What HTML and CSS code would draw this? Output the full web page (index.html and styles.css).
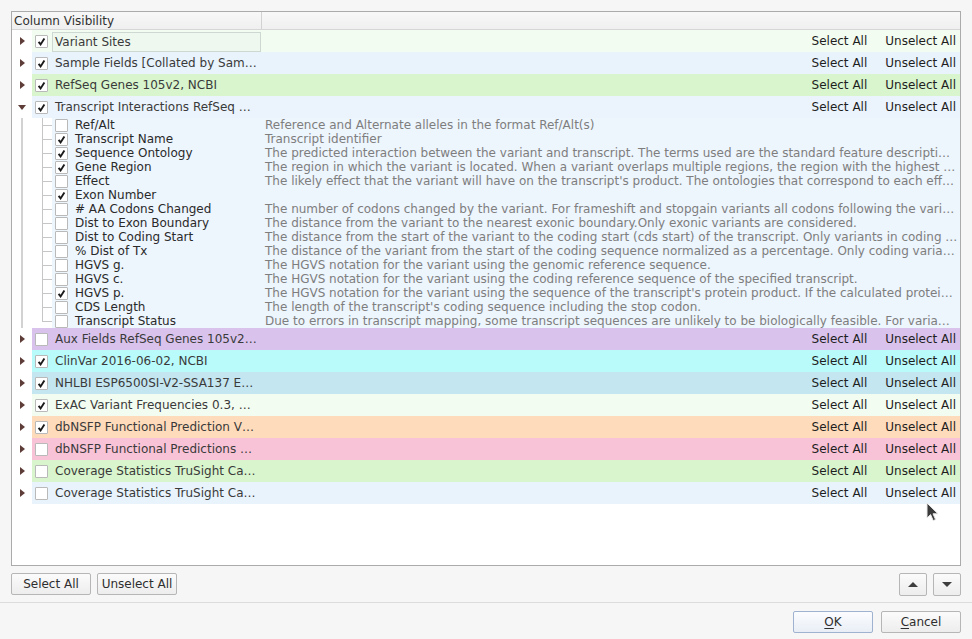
FILE: index.html
```html
<!DOCTYPE html>
<html>
<head>
<meta charset="utf-8">
<link rel="stylesheet" href="styles.css">
</head>
<body>
<div class="main">
  <div class="tree">
    <div class="header"><div class="hcol0">Column Visibility</div><div class="hcol1"></div></div>

    <div class="row">
      <div class="branch"><span class="arrow-r"></span></div>
      <div class="cell bg-vs">
        <div class="name"><span class="cb on"><svg viewBox="0 0 9 9"><path d="M1.6 4.8 L3.6 7.4 L7.4 1.4"/></svg></span><span class="label focus">Variant Sites</span></div>
        <div class="actions"><span>Select All</span><span>Unselect All</span></div>
      </div>
    </div>
    <div class="row">
      <div class="branch"><span class="arrow-r"></span></div>
      <div class="cell bg-sf">
        <div class="name"><span class="cb on"><svg viewBox="0 0 9 9"><path d="M1.6 4.8 L3.6 7.4 L7.4 1.4"/></svg></span><span class="label">Sample Fields [Collated by Sam…</span></div>
        <div class="actions"><span>Select All</span><span>Unselect All</span></div>
      </div>
    </div>
    <div class="row">
      <div class="branch"><span class="arrow-r"></span></div>
      <div class="cell bg-rg">
        <div class="name"><span class="cb on"><svg viewBox="0 0 9 9"><path d="M1.6 4.8 L3.6 7.4 L7.4 1.4"/></svg></span><span class="label">RefSeq Genes 105v2, NCBI</span></div>
        <div class="actions"><span>Select All</span><span>Unselect All</span></div>
      </div>
    </div>
    <div class="row">
      <div class="branch"><span class="arrow-d"></span></div>
      <div class="cell bg-ti">
        <div class="name"><span class="cb on"><svg viewBox="0 0 9 9"><path d="M1.6 4.8 L3.6 7.4 L7.4 1.4"/></svg></span><span class="label">Transcript Interactions RefSeq …</span></div>
        <div class="actions"><span>Select All</span><span>Unselect All</span></div>
      </div>
    </div>

    <div class="crow"><div class="cbranch"></div><div class="ccell"><div class="cname"><span class="cb"></span><span>Ref/Alt</span></div><div class="desc">Reference and Alternate alleles in the format Ref/Alt(s)</div></div></div>
    <div class="crow"><div class="cbranch"></div><div class="ccell"><div class="cname"><span class="cb on"><svg viewBox="0 0 9 9"><path d="M1.6 4.8 L3.6 7.4 L7.4 1.4"/></svg></span><span>Transcript Name</span></div><div class="desc">Transcript identifier</div></div></div>
    <div class="crow"><div class="cbranch"></div><div class="ccell"><div class="cname"><span class="cb on"><svg viewBox="0 0 9 9"><path d="M1.6 4.8 L3.6 7.4 L7.4 1.4"/></svg></span><span>Sequence Ontology</span></div><div class="desc">The predicted interaction between the variant and transcript. The terms used are the standard feature descripti…</div></div></div>
    <div class="crow"><div class="cbranch"></div><div class="ccell"><div class="cname"><span class="cb on"><svg viewBox="0 0 9 9"><path d="M1.6 4.8 L3.6 7.4 L7.4 1.4"/></svg></span><span>Gene Region</span></div><div class="desc">The region in which the variant is located. When a variant overlaps multiple regions, the region with the highest …</div></div></div>
    <div class="crow"><div class="cbranch"></div><div class="ccell"><div class="cname"><span class="cb"></span><span>Effect</span></div><div class="desc">The likely effect that the variant will have on the transcript's product. The ontologies that correspond to each eff…</div></div></div>
    <div class="crow"><div class="cbranch"></div><div class="ccell"><div class="cname"><span class="cb on"><svg viewBox="0 0 9 9"><path d="M1.6 4.8 L3.6 7.4 L7.4 1.4"/></svg></span><span>Exon Number</span></div><div class="desc"></div></div></div>
    <div class="crow"><div class="cbranch"></div><div class="ccell"><div class="cname"><span class="cb"></span><span># AA Codons Changed</span></div><div class="desc">The number of codons changed by the variant. For frameshift and stopgain variants all codons following the vari…</div></div></div>
    <div class="crow"><div class="cbranch"></div><div class="ccell"><div class="cname"><span class="cb"></span><span>Dist to Exon Boundary</span></div><div class="desc">The distance from the variant to the nearest exonic boundary.Only exonic variants are considered.</div></div></div>
    <div class="crow"><div class="cbranch"></div><div class="ccell"><div class="cname"><span class="cb"></span><span>Dist to Coding Start</span></div><div class="desc">The distance from the start of the variant to the coding start (cds start) of the transcript. Only variants in coding …</div></div></div>
    <div class="crow"><div class="cbranch"></div><div class="ccell"><div class="cname"><span class="cb"></span><span>% Dist of Tx</span></div><div class="desc">The distance of the variant from the start of the coding sequence normalized as a percentage. Only coding varia…</div></div></div>
    <div class="crow"><div class="cbranch"></div><div class="ccell"><div class="cname"><span class="cb"></span><span>HGVS g.</span></div><div class="desc">The HGVS notation for the variant using the genomic reference sequence.</div></div></div>
    <div class="crow"><div class="cbranch"></div><div class="ccell"><div class="cname"><span class="cb"></span><span>HGVS c.</span></div><div class="desc">The HGVS notation for the variant using the coding reference sequence of the specified transcript.</div></div></div>
    <div class="crow"><div class="cbranch"></div><div class="ccell"><div class="cname"><span class="cb on"><svg viewBox="0 0 9 9"><path d="M1.6 4.8 L3.6 7.4 L7.4 1.4"/></svg></span><span>HGVS p.</span></div><div class="desc">The HGVS notation for the variant using the sequence of the transcript's protein product. If the calculated protei…</div></div></div>
    <div class="crow"><div class="cbranch"></div><div class="ccell"><div class="cname"><span class="cb"></span><span>CDS Length</span></div><div class="desc">The length of the transcript's coding sequence including the stop codon.</div></div></div>
    <div class="crow"><div class="cbranch last"></div><div class="ccell"><div class="cname"><span class="cb"></span><span>Transcript Status</span></div><div class="desc">Due to errors in transcript mapping, some transcript sequences are unlikely to be biologically feasible. For varia…</div></div></div>

    <div class="row">
      <div class="branch"><span class="arrow-r"></span></div>
      <div class="cell bg-aux">
        <div class="name"><span class="cb"></span><span class="label">Aux Fields RefSeq Genes 105v2…</span></div>
        <div class="actions"><span>Select All</span><span>Unselect All</span></div>
      </div>
    </div>
    <div class="row">
      <div class="branch"><span class="arrow-r"></span></div>
      <div class="cell bg-cv">
        <div class="name"><span class="cb on"><svg viewBox="0 0 9 9"><path d="M1.6 4.8 L3.6 7.4 L7.4 1.4"/></svg></span><span class="label">ClinVar 2016-06-02, NCBI</span></div>
        <div class="actions"><span>Select All</span><span>Unselect All</span></div>
      </div>
    </div>
    <div class="row">
      <div class="branch"><span class="arrow-r"></span></div>
      <div class="cell bg-nh">
        <div class="name"><span class="cb on"><svg viewBox="0 0 9 9"><path d="M1.6 4.8 L3.6 7.4 L7.4 1.4"/></svg></span><span class="label">NHLBI ESP6500SI-V2-SSA137 E…</span></div>
        <div class="actions"><span>Select All</span><span>Unselect All</span></div>
      </div>
    </div>
    <div class="row">
      <div class="branch"><span class="arrow-r"></span></div>
      <div class="cell bg-ex">
        <div class="name"><span class="cb on"><svg viewBox="0 0 9 9"><path d="M1.6 4.8 L3.6 7.4 L7.4 1.4"/></svg></span><span class="label">ExAC Variant Frequencies 0.3, …</span></div>
        <div class="actions"><span>Select All</span><span>Unselect All</span></div>
      </div>
    </div>
    <div class="row">
      <div class="branch"><span class="arrow-r"></span></div>
      <div class="cell bg-db1">
        <div class="name"><span class="cb on"><svg viewBox="0 0 9 9"><path d="M1.6 4.8 L3.6 7.4 L7.4 1.4"/></svg></span><span class="label">dbNSFP Functional Prediction V…</span></div>
        <div class="actions"><span>Select All</span><span>Unselect All</span></div>
      </div>
    </div>
    <div class="row">
      <div class="branch"><span class="arrow-r"></span></div>
      <div class="cell bg-db2">
        <div class="name"><span class="cb"></span><span class="label">dbNSFP Functional Predictions …</span></div>
        <div class="actions"><span>Select All</span><span>Unselect All</span></div>
      </div>
    </div>
    <div class="row">
      <div class="branch"><span class="arrow-r"></span></div>
      <div class="cell bg-cs1">
        <div class="name"><span class="cb"></span><span class="label">Coverage Statistics TruSight Ca…</span></div>
        <div class="actions"><span>Select All</span><span>Unselect All</span></div>
      </div>
    </div>
    <div class="row">
      <div class="branch"><span class="arrow-r"></span></div>
      <div class="cell bg-cs2">
        <div class="name"><span class="cb"></span><span class="label">Coverage Statistics TruSight Ca…</span></div>
        <div class="actions"><span>Select All</span><span>Unselect All</span></div>
      </div>
    </div>
  </div>

  <div class="btnrow">
    <button class="btn">Select All</button>
    <button class="btn">Unselect All</button>
    <span class="spacer"></span>
    <button class="abtn"><span class="tri-up"></span></button>
    <button class="abtn"><span class="tri-down"></span></button>
  </div>
</div>
<div class="sep"></div>
<div class="footer">
  <button class="btn default"><u>O</u>K</button>
  <button class="btn"><u>C</u>ancel</button>
</div>

<svg class="cursor" width="14" height="21" viewBox="0 0 14 21"><path d="M1 1 L1 16 L4.6 12.6 L7.2 18.6 L9.6 17.6 L7 11.8 L12 11.8 Z" fill="#3a3a3a" stroke="#e8e8e8" stroke-width="1"/></svg>
</body>
</html>
```

FILE: styles.css
```css
html, body {
  margin: 0;
  padding: 0;
}
body {
  width: 972px;
  height: 639px;
  overflow: hidden;
  position: relative;
  background: #f6f6f6;
  font-family: "DejaVu Sans", sans-serif;
  font-size: 12px;
  color: #2e2e2e;
}
.main {
  padding: 11px 11px 0 11px;
}
.tree {
  height: 555px;
  box-sizing: border-box;
  border: 1px solid #ababab;
  background: #ffffff;
  display: flex;
  flex-direction: column;
  overflow: hidden;
}
.header {
  height: 18px;
  box-sizing: border-box;
  border-bottom: 1px solid #d6d6d6;
  background: linear-gradient(#f8f8f8, #efefef);
  display: flex;
  flex: none;
}
.hcol0 {
  width: 250px;
  box-sizing: border-box;
  border-right: 1px solid #d2d2d2;
  padding-left: 2px;
  padding-top: 1px;
  line-height: 16px;
  color: #303030;
}
.hcol1 {
  flex: 1;
}
.row {
  display: flex;
  height: 22px;
  flex: none;
}
.branch {
  width: 20px;
  flex: none;
  display: flex;
  align-items: center;
  justify-content: center;
}
.arrow-r {
  width: 0;
  height: 0;
  border-top: 4px solid transparent;
  border-bottom: 4px solid transparent;
  border-left: 5px solid #5e3c38;
  margin-left: 1px;
}
.arrow-d {
  width: 0;
  height: 0;
  border-left: 4px solid transparent;
  border-right: 4px solid transparent;
  border-top: 5px solid #5e3c38;
  margin-top: 1px;
}
.cell {
  flex: 1;
  display: flex;
  align-items: center;
  min-width: 0;
}
.name {
  width: 229px;
  flex: none;
  box-sizing: border-box;
  padding-left: 3px;
  display: flex;
  align-items: center;
  height: 100%;
  overflow: hidden;
}
.label {
  white-space: nowrap;
  color: #3a3a3a;
  line-height: 20px;
}
.label.focus {
  flex: 1;
  margin-left: -3px;
  padding-left: 2px;
  border: 1px solid #cdd8d2;
  background: #eef8ef;
  height: 20px;
  box-sizing: border-box;
  line-height: 18px;
  margin-top: 1px;
}
.cb {
  width: 13px;
  height: 13px;
  box-sizing: border-box;
  border: 1px solid #b9b9b9;
  border-radius: 1px;
  background: #ffffff;
  margin-right: 7px;
  flex: none;
  display: flex;
  align-items: center;
  justify-content: center;
}
.cb svg {
  width: 9px;
  height: 9px;
}
.cb svg path {
  fill: none;
  stroke: #1a1a1a;
  stroke-width: 1.9;
}
.actions {
  flex: 1;
  display: flex;
  justify-content: flex-end;
  gap: 18px;
  padding-right: 4px;
  color: #1e1e1e;
  white-space: nowrap;
}
.bg-vs { background: #f3fcf0; }
.bg-sf { background: #e8f3fc; }
.bg-rg { background: #d8f5cd; }
.bg-ti { background: #ebf4fc; }
.bg-aux { background: #d9c3ec; }
.bg-cv { background: #b9fafa; }
.bg-nh { background: #c4e6f1; }
.bg-ex { background: #f3fcf1; }
.bg-db1 { background: #fedbba; }
.bg-db2 { background: #f9c3d7; }
.bg-cs1 { background: #d9f5cd; }
.bg-cs2 { background: #e8f3fc; }

.crow {
  display: flex;
  height: 14px;
  flex: none;
}
.cbranch {
  width: 40px;
  flex: none;
  background:
    linear-gradient(#d2d2d2, #d2d2d2) 9px 0 / 2px 100% no-repeat,
    linear-gradient(#c6c6c6, #c6c6c6) 30px 0 / 1px 100% no-repeat,
    linear-gradient(#c6c6c6, #c6c6c6) 30px 7px / 10px 1px no-repeat,
    #ffffff;
}
.cbranch.last {
  background:
    linear-gradient(#d2d2d2, #d2d2d2) 9px 0 / 2px 100% no-repeat,
    linear-gradient(#c6c6c6, #c6c6c6) 30px 0 / 1px 8px no-repeat,
    linear-gradient(#c6c6c6, #c6c6c6) 30px 7px / 10px 1px no-repeat,
    #ffffff;
}
.ccell {
  flex: 1;
  display: flex;
  align-items: center;
  background: #edf5fd;
  min-width: 0;
}
.cname {
  width: 209px;
  flex: none;
  box-sizing: border-box;
  padding-left: 3px;
  display: flex;
  align-items: center;
  white-space: nowrap;
  line-height: 14px;
  color: #2a2a2a;
}
.desc {
  flex: 1;
  min-width: 0;
  padding-left: 4px;
  white-space: nowrap;
  overflow: hidden;
  color: #7e7e7e;
  line-height: 14px;
}

.btnrow {
  display: flex;
  align-items: center;
  margin-top: 6px;
  height: 24px;
  gap: 6px;
}
.spacer {
  flex: 1;
}
.btn {
  font-family: "DejaVu Sans", sans-serif;
  font-size: 12px;
  color: #2e2e2e;
  width: 80px;
  height: 22px;
  box-sizing: border-box;
  padding: 0;
  border: 1px solid #b6b6b6;
  border-radius: 2px;
  background: linear-gradient(#fbfbfb, #ededed);
}
.abtn {
  width: 28px;
  height: 23px;
  box-sizing: border-box;
  padding: 0;
  border: 1px solid #b6b6b6;
  border-radius: 2px;
  background: linear-gradient(#fbfbfb, #ededed);
  display: flex;
  align-items: center;
  justify-content: center;
}
.tri-up {
  width: 0;
  height: 0;
  border-left: 5px solid transparent;
  border-right: 5px solid transparent;
  border-bottom: 5px solid #3e3e3e;
}
.tri-down {
  width: 0;
  height: 0;
  border-left: 5px solid transparent;
  border-right: 5px solid transparent;
  border-top: 5px solid #3e3e3e;
}
.sep {
  height: 1px;
  background: #dcdcdc;
  margin-top: 6px;
}
.footer {
  display: flex;
  justify-content: flex-end;
  gap: 8px;
  padding: 8px 11px 0 11px;
}
.btn.default {
  border-color: #9fb2cf;
  background: linear-gradient(#fbfcfe, #e9eef6);
}
.btn u {
  text-decoration: underline;
  text-underline-offset: 2px;
}
.cursor {
  position: absolute;
  left: 926px;
  top: 502px;
}
```
